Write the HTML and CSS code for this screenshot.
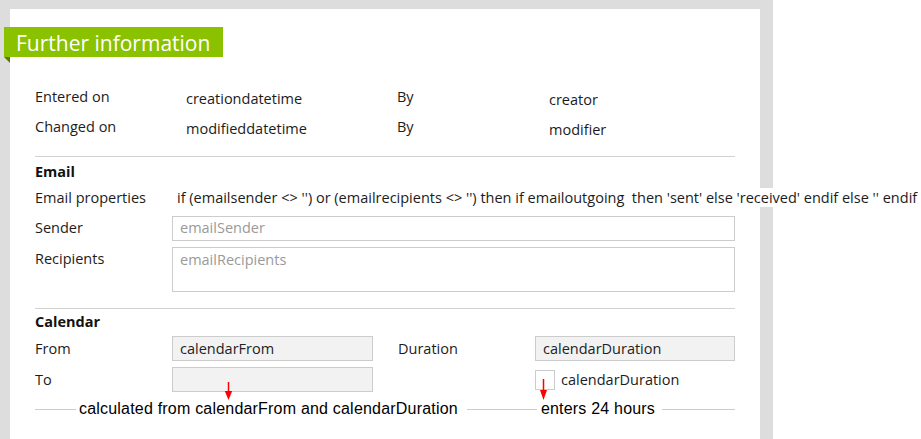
FILE: index.html
```html
<!DOCTYPE html>
<html>
<head>
<meta charset="utf-8">
<link rel="stylesheet" href="styles.css">
</head>
<body>
<div class="frame">
  <div class="panel">
    <div class="title">Further information</div>

    <div class="meta">
      <span class="m-label">Entered on</span>
      <span class="m-val">creationdatetime</span>
      <span class="m-by">By</span>
      <span class="m-who">creator</span>
      <span class="m-label">Changed on</span>
      <span class="m-val">modifieddatetime</span>
      <span class="m-by">By</span>
      <span class="m-who">modifier</span>
    </div>

    <section class="group first">
      <h3 class="group-title">Email</h3>
      <div class="row props">
        <span class="label">Email properties</span>
        <span class="expr">if (emailsender &lt;&gt; '') or (emailrecipients &lt;&gt; '') then if emailoutgoing &nbsp;then 'sent' else 'received' endif else '' endif</span>
      </div>
      <div class="row sender">
        <span class="label">Sender</span>
        <div class="field">emailSender</div>
      </div>
      <div class="row recipients">
        <span class="label">Recipients</span>
        <div class="field area">emailRecipients</div>
      </div>
    </section>

    <section class="group calendar">
      <h3 class="group-title">Calendar</h3>
      <div class="cal-grid">
        <span class="label">From</span>
        <div class="field filled">calendarFrom</div>
        <span class="label dur">Duration</span>
        <div class="field filled">calendarDuration</div>
        <span class="label">To</span>
        <div class="field filled"></div>
        <span></span>
        <div class="check"><span class="box"></span><span>calendarDuration</span></div>
      </div>
      <div class="notes">
        <span class="seg s1"></span>
        <span class="note n1">calculated from calendarFrom and calendarDuration</span>
        <span class="seg s2"></span>
        <span class="note n2">enters 24 hours</span>
        <span class="seg s3"></span>
      </div>
    </section>

    <svg class="arrow a1" width="9" height="18" viewBox="0 0 9 18">
      <line x1="4.5" y1="0" x2="4.5" y2="10" stroke="#ff0000" stroke-width="1.5"/>
      <polygon points="0.8,9 8.2,9 4.5,18" fill="#ff0000"/>
    </svg>
    <svg class="arrow a2" width="9" height="21" viewBox="0 0 9 21">
      <line x1="4.5" y1="0" x2="4.5" y2="12" stroke="#ff0000" stroke-width="1.5"/>
      <polygon points="1,11 8,11 4.5,21" fill="#ff0000"/>
    </svg>
  </div>
</div>
</body>
</html>
```

FILE: styles.css
```css
html, body {
  margin: 0;
  padding: 0;
}

body {
  background: #ffffff;
  font-family: "Open Sans", "Noto Sans", sans-serif;
  font-size: 14.5px;
  line-height: 20px;
  color: #1c1c1c;
  overflow: hidden;
}

.frame {
  width: 773px;
  height: 439px;
  box-sizing: border-box;
  background: #dddddd;
  padding: 9px 13px 0 10px;
}

.panel {
  position: relative;
  background: #ffffff;
  height: 100%;
  box-sizing: border-box;
  padding: 18px 25px 0 25px;
}

.title {
  position: relative;
  margin-left: -31px;
  width: 219px;
  height: 30px;
  box-sizing: border-box;
  padding-left: 12px;
  background: #8bc200;
  color: #ffffff;
  font-size: 21px;
  line-height: 33px;
  white-space: nowrap;
}

.title::after {
  content: "";
  position: absolute;
  left: 0;
  top: 30px;
  border-top: 6px solid #5a7c00;
  border-left: 6px solid transparent;
}

.meta {
  margin-top: 25px;
  display: grid;
  grid-template-columns: 151px 211px 152px 1fr;
  row-gap: 2px;
  align-items: start;
}

.m-label { padding-top: 5px; }
.m-val { padding-top: 7px; }
.m-by { padding-top: 5px; }
.m-who { padding-top: 8px; }

.group {
  border-top: 1px solid #d2d2d2;
  margin-top: 15px;
  padding-top: 5px;
}

.group.first {
  margin-top: 16px;
}

.group-title {
  margin: 0;
  font-size: 14.5px;
  font-weight: 700;
  line-height: 20px;
  color: #111111;
}

.row {
  display: grid;
  grid-template-columns: 137px 1fr;
  align-items: start;
}

.row.props {
  margin-top: 6px;
}

.expr {
  padding-left: 5px;
  white-space: nowrap;
  background: #ffffff;
  justify-self: start;
  line-height: 19px;
}

.row.sender {
  margin-top: 8px;
}

.row.sender .label,
.row.recipients .label {
  padding-top: 2px;
}

.row.recipients {
  margin-top: 6px;
}

.field {
  height: 25px;
  box-sizing: border-box;
  border: 1px solid #cccccc;
  background: #ffffff;
  padding: 1px 7px;
  color: #9a9a9a;
  white-space: nowrap;
}

.field.area {
  height: 45px;
  padding-top: 2px;
}

.calendar {
  margin-top: 16px;
  padding-top: 3px;
}

.cal-grid {
  margin-top: 4px;
  display: grid;
  grid-template-columns: 137px 201px 162px 200px;
  grid-auto-rows: 25px;
  row-gap: 6px;
  align-items: center;
}

.label.dur {
  padding-left: 25px;
}

.field.filled {
  background: #f2f2f2;
  color: #222222;
  padding: 0 7px;
  line-height: 23px;
}

.check {
  display: flex;
  align-items: center;
  gap: 6px;
}

.box {
  width: 20px;
  height: 20px;
  box-sizing: border-box;
  border: 1px solid #cccccc;
  background: #ffffff;
}

.notes {
  margin-top: 8px;
  height: 18px;
  display: flex;
  align-items: center;
  font-family: "Liberation Sans", Arial, sans-serif;
  font-size: 16px;
  line-height: 18px;
  letter-spacing: 0.2px;
  color: #000000;
}

.seg {
  height: 1px;
  background: #cccccc;
  flex: none;
}

.s1 { width: 41px; margin-right: 3px; }
.n1 { margin-right: 9px; white-space: nowrap; }
.s2 { width: 70px; margin-right: 4px; }
.n2 { margin-right: 7px; white-space: nowrap; }
.s3 { flex: 1; }

.arrow {
  position: absolute;
}

.a1 { left: 214px; top: 373px; }
.a2 { left: 529px; top: 370px; }
```
